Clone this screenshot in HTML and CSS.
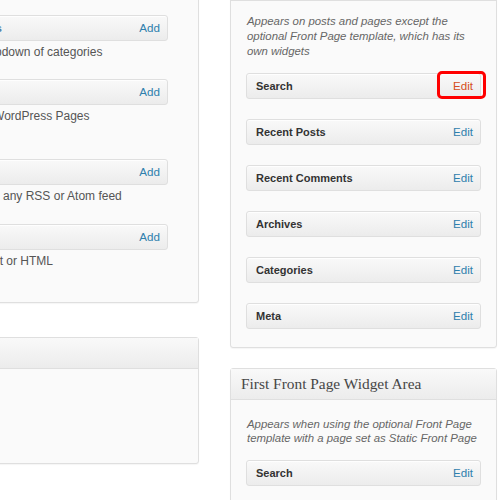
FILE: index.html
```html
<!DOCTYPE html>
<html>
<head>
<meta charset="utf-8">
<link rel="stylesheet" href="styles.css">
</head>
<body>
<div class="page">
  <div class="col-left">
    <section class="panel available">
      <div class="item">
        <div class="bar"><span class="bar-title">Categories</span><a class="bar-action">Add</a></div>
        <p class="widget-desc">A list or dropdown of categories</p>
      </div>
      <div class="item item-tall">
        <div class="bar"><span class="bar-title">Pages</span><a class="bar-action">Add</a></div>
        <p class="widget-desc">Your site’s WordPress Pages</p>
      </div>
      <div class="item item-mid">
        <div class="bar"><span class="bar-title">RSS</span><a class="bar-action">Add</a></div>
        <p class="widget-desc">Entries from any RSS or Atom feed</p>
      </div>
      <div class="item">
        <div class="bar"><span class="bar-title">Text</span><a class="bar-action">Add</a></div>
        <p class="widget-desc">Arbitrary text or HTML</p>
      </div>
    </section>
    <section class="panel inactive">
      <div class="panel-head"><h3 class="panel-title">Inactive Widgets</h3></div>
      <div class="panel-body"></div>
    </section>
  </div>
  <div class="col-right">
    <section class="panel sidebar">
      <div class="panel-head"><h3 class="panel-title">Main Sidebar</h3></div>
      <div class="sidebar-body">
        <p class="sidebar-desc">Appears on posts and pages except the optional Front Page template, which has its own widgets</p>
        <div class="bar"><span class="bar-title">Search</span><a class="bar-action edit-hot">Edit</a></div>
        <div class="bar"><span class="bar-title">Recent Posts</span><a class="bar-action">Edit</a></div>
        <div class="bar"><span class="bar-title">Recent Comments</span><a class="bar-action">Edit</a></div>
        <div class="bar"><span class="bar-title">Archives</span><a class="bar-action">Edit</a></div>
        <div class="bar"><span class="bar-title">Categories</span><a class="bar-action">Edit</a></div>
        <div class="bar"><span class="bar-title">Meta</span><a class="bar-action">Edit</a></div>
      </div>
    </section>
    <section class="panel sidebar second">
      <div class="panel-head"><h3 class="panel-title">First Front Page Widget Area</h3></div>
      <div class="sidebar-body">
        <p class="sidebar-desc">Appears when using the optional Front Page template with a page set as Static Front Page</p>
        <div class="bar"><span class="bar-title">Search</span><a class="bar-action">Edit</a></div>
      </div>
    </section>
  </div>
</div>
</body>
</html>
```
FILE: styles.css
```css
html, body {
  margin: 0;
  padding: 0;
  background: #ffffff;
  overflow: hidden;
}
body {
  font-family: "Liberation Sans", Arial, sans-serif;
  font-size: 12px;
  color: #333;
  width: 500px;
  height: 500px;
}
.page {
  display: flex;
  align-items: flex-start;
}
.col-left {
  flex: none;
  width: 299px;
  margin-left: -100px;
  margin-top: -20px;
  display: flex;
  flex-direction: column;
}
.col-right {
  flex: none;
  width: 267px;
  margin-left: 31px;
  margin-top: -31px;
  display: flex;
  flex-direction: column;
}
.panel {
  background: #fafafa;
  border: 1px solid #dfdfdf;
  border-radius: 3px;
  box-shadow: 0 1px 1px rgba(0, 0, 0, 0.04);
  box-sizing: border-box;
}
.available {
  padding: 34px 30px 14px 29px;
}
.item {
  height: 64px;
}
.item-tall {
  height: 80px;
}
.item-mid {
  height: 65px;
}
.bar {
  box-sizing: border-box;
  height: 26px;
  border: 1px solid #dfdfdf;
  border-radius: 3px;
  background: linear-gradient(to bottom, #f9f9f9, #ececec);
  box-shadow: 0 1px 0 rgba(255, 255, 255, 0.8) inset;
  display: flex;
  align-items: center;
  justify-content: space-between;
  padding: 0 7px 0 9px;
}
.available .bar {
  padding-left: 14px;
}
.bar-title {
  font-weight: bold;
  font-size: 11px;
  color: #333;
  line-height: 24px;
}
.available .bar-title {
  color: #4a7fa6;
}
.bar-action {
  display: block;
  color: #2e80ad;
  position: relative;
  font-size: 11.6px;
  line-height: 24px;
}
.widget-desc {
  margin: 3px 0 0 5px;
  line-height: 16px;
  font-size: 12px;
  color: #555;
}
.inactive {
  margin-top: 34px;
  height: 127px;
  display: flex;
  flex-direction: column;
}
.panel-head {
  box-sizing: border-box;
  height: 31px;
  background: linear-gradient(to bottom, #f9f9f9, #ececec);
  border-bottom: 1px solid #dfdfdf;
  padding: 0 10px;
  display: flex;
  align-items: center;
}
.panel-title {
  margin: 0;
  font-family: "Liberation Serif", "Times New Roman", serif;
  font-weight: normal;
  font-size: 15.4px;
  color: #464646;
}
.inactive .panel-title {
  visibility: hidden;
}
.panel-body {
  flex: 1;
}
.sidebar-body {
  padding: 13px 15px 18px 15px;
  display: flex;
  flex-direction: column;
  gap: 20px;
}
.sidebar-desc {
  margin: 0 0 -6px 1px;
  font-style: italic;
  font-size: 11.4px;
  color: #666;
  line-height: 15px;
}
.bar-action.edit-hot {
  color: #d54e21;
}
.edit-hot::after {
  content: "";
  position: absolute;
  left: -16px;
  right: -13px;
  top: -3px;
  bottom: -1px;
  border: 3px solid #ff0000;
  border-radius: 5px;
}
.second {
  margin-top: 20px;
}
.second .sidebar-body {
  padding-top: 17px;
}
.second .sidebar-desc {
  line-height: 14px;
  margin-bottom: -5px;
}
```
